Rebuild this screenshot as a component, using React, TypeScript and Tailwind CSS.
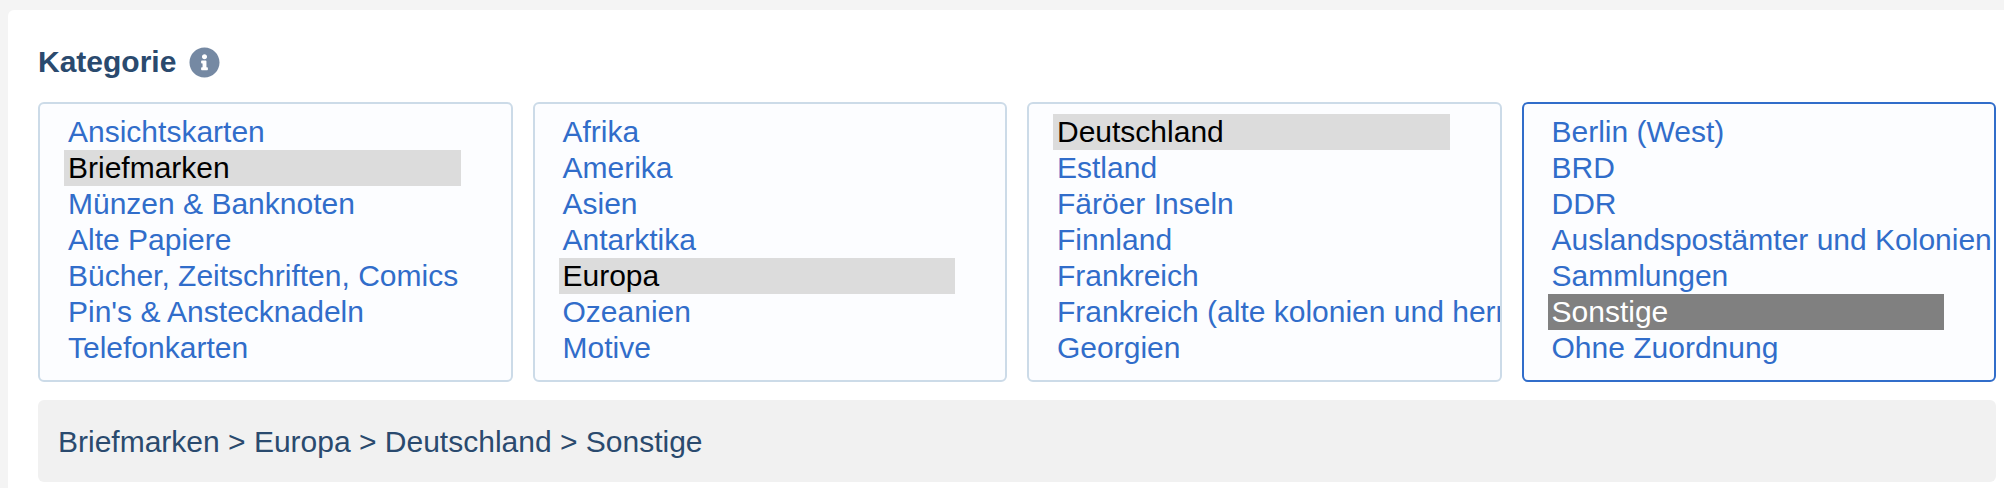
import { useState } from "react";
import { FaInfoCircle } from "react-icons/fa";

const levels = [
  {
    label: "Kategorie",
    options: ["Ansichtskarten", "Briefmarken", "Münzen & Banknoten", "Alte Papiere", "Bücher, Zeitschriften, Comics", "Pin's & Anstecknadeln", "Telefonkarten"],
  },
  {
    label: "Kontinent",
    options: ["Afrika", "Amerika", "Asien", "Antarktika", "Europa", "Ozeanien", "Motive"],
  },
  {
    label: "Land",
    options: ["Deutschland", "Estland", "Färöer Inseln", "Finnland", "Frankreich", "Frankreich (alte kolonien und herrschaften)", "Georgien"],
  },
  {
    label: "Gebiet",
    options: ["Berlin (West)", "BRD", "DDR", "Auslandspostämter und Kolonien", "Sammlungen", "Sonstige", "Ohne Zuordnung"],
  },
];

const styles = {
  idle: {
    select: "border-[#ccdbe8]",
    option: "checked:bg-[linear-gradient(#dcdcdc,#dcdcdc)] checked:[-webkit-text-fill-color:#000000]",
  },
  active: {
    select: "border-[#316dca]",
    option: "checked:bg-[linear-gradient(#808080,#808080)] checked:[-webkit-text-fill-color:#ffffff]",
  },
};

export default function App() {
  const [path, setPath] = useState(["Briefmarken", "Europa", "Deutschland", "Sonstige"]);

  return (
    <div className="flex min-h-screen flex-col bg-[#f4f4f4] pt-2.5 pl-2 font-['Liberation_Sans',Arial,sans-serif] text-[30px] leading-9">
      <main className="flex-1 rounded-tl-md bg-white pt-[34px] pr-2 pb-1.5 pl-[30px] text-[#2a4a6e]">
        <div className="flex items-center gap-[13px]">
          <h1 className="font-bold">Kategorie</h1>
          <button type="button" aria-label="Hilfe zur Kategorie" className="text-[#7589a3]">
            <FaInfoCircle size={31} />
          </button>
        </div>

        <div className="mt-[22px] grid grid-cols-4 gap-5">
          {levels.map((level, i) => {
            const style = i === levels.length - 1 ? styles.active : styles.idle;
            return (
              <select
                key={level.label}
                size={7}
                aria-label={level.label}
                value={path[i]}
                onChange={(e) => setPath(path.map((p, j) => (j === i ? e.target.value : p)))}
                className={`h-[280px] w-full min-w-0 overflow-hidden rounded-md border-2 bg-[#fcfdff] pt-2.5 pr-[50px] pb-3.5 pl-6 text-[#316dca] outline-none ${style.select}`}
              >
                {level.options.map((option) => (
                  <option key={option} value={option} className={`h-9 px-1 pt-px pb-0 ${style.option}`}>
                    {option}
                  </option>
                ))}
              </select>
            );
          })}
        </div>

        {/* Selected path */}
        <p className="mt-[18px] rounded-md bg-[#f1f1f1] px-5 pt-6 pb-[22px]">{path.join(" > ")}</p>
      </main>
    </div>
  );
}
